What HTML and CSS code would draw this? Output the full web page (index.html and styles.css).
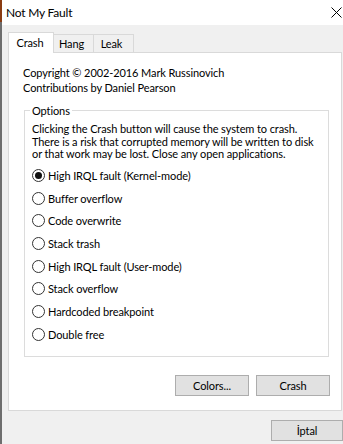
FILE: index.html
```html
<!DOCTYPE html>
<html lang="en">
<head>
    <meta charset="UTF-8">
    <title>Not My Fault</title>
    <link rel="stylesheet" href="styles.css">
</head>
<body>
    <div class="window">
        <div class="edge"></div>
        <div class="main">
            <div class="titlebar">
                <span class="title">Not My Fault</span>
                <svg class="close" width="11" height="11" viewBox="0 0 11 11">
                    <path d="M0.5 0.5 L10.5 10.5 M10.5 0.5 L0.5 10.5" stroke="#000" stroke-width="1" fill="none"/>
                </svg>
            </div>
            <div class="body">
                <div class="tabs">
                    <div class="tab active">Crash</div>
                    <div class="tab">Hang</div>
                    <div class="tab">Leak</div>
                </div>
                <div class="panel">
                    <p class="credits">Copyright © 2002-2016 Mark Russinovich<br>Contributions by Daniel Pearson</p>
                    <fieldset class="options">
                        <legend>Options</legend>
                        <p class="warning">Clicking the Crash button will cause the system to crash.<br>There is a risk that corrupted memory will be written to disk<br>or that work may be lost. Close any open applications.</p>
                        <div class="radio checked"><span class="dot"></span>High IRQL fault (Kernel-mode)</div>
                        <div class="radio"><span class="dot"></span>Buffer overflow</div>
                        <div class="radio"><span class="dot"></span>Code overwrite</div>
                        <div class="radio"><span class="dot"></span>Stack trash</div>
                        <div class="radio"><span class="dot"></span>High IRQL fault (User-mode)</div>
                        <div class="radio"><span class="dot"></span>Stack overflow</div>
                        <div class="radio"><span class="dot"></span>Hardcoded breakpoint</div>
                        <div class="radio"><span class="dot"></span>Double free</div>
                    </fieldset>
                    <div class="actions">
                        <button type="button" class="btn">Colors...</button>
                        <button type="button" class="btn">Crash</button>
                    </div>
                </div>
                <div class="footer">
                    <button type="button" class="btn">İptal</button>
                </div>
            </div>
        </div>
    </div>
</body>
</html>
```

FILE: styles.css
```css
* { margin: 0; padding: 0; box-sizing: border-box; }
body {
    width: 343px;
    height: 444px;
    overflow: hidden;
    background: #f0f0f0;
    font-family: Lato, 'Liberation Sans', sans-serif;
    font-size: 11px;
    letter-spacing: -0.1px;
    color: #000;
}
.window { display: flex; height: 444px; }
.edge {
    width: 2px;
    flex-shrink: 0;
    background: linear-gradient(#8a3c12 0, #8a3c12 22px, #6e6e6e 22px);
}
.main { flex: 1; display: flex; flex-direction: column; }

.titlebar {
    height: 25px;
    background: #fff;
    display: flex;
    align-items: center;
    justify-content: space-between;
    padding: 0 1px 1px 4px;
}
.title { font-size: 12px; line-height: 15px; letter-spacing: -0.2px; }
.close { margin-top: 1px; }

.body { padding: 7px 0 0 6px; }
.tabs { display: flex; align-items: flex-end; height: 20px; }
.tab {
    width: 40px;
    height: 18px;
    line-height: 18px;
    padding-right: 4px;
    text-align: center;
    border: 1px solid #d9d9d9;
    border-bottom: none;
    border-left: none;
    background: #f0f0f0;
}
.tab.active {
    position: relative;
    z-index: 1;
    width: 46px;
    height: 21px;
    margin-bottom: -1px;
    padding-right: 2px;
    border-left: 1px solid #d9d9d9;
    background: #fff;
    line-height: 19px;
}

.panel {
    width: 334px;
    height: 359px;
    background: #fff;
    border: 1px solid #d9d9d9;
    padding: 12px 0 0 14px;
}
.credits { line-height: 15px; white-space: nowrap; }

.options {
    width: 305px;
    margin: 8px 0 0 1px;
    border: 1px solid #dcdcdc;
    padding: 0 7px 10px 7px;
}
.options legend { padding: 0 2px; margin-left: -2px; line-height: 15px; }
.warning { line-height: 12.7px; margin-top: 5px; margin-bottom: 3px; white-space: nowrap; }

.radio {
    display: flex;
    align-items: center;
    height: 22.7px;
    white-space: nowrap;
}
.dot {
    width: 13px;
    height: 13px;
    border: 1px solid #333;
    border-radius: 50%;
    background: #fff;
    margin-right: 3px;
    display: flex;
    align-items: center;
    justify-content: center;
}
.radio.checked .dot::after {
    content: "";
    width: 7px;
    height: 7px;
    border-radius: 50%;
    background: #111;
}

.actions {
    width: 307px;
    margin-top: 18px;
    display: flex;
    justify-content: flex-end;
    gap: 7px;
}
.btn {
    width: 74px;
    height: 21px;
    background: #e1e1e1;
    border: 1px solid #adadad;
    font-family: inherit;
    font-size: 11px;
    letter-spacing: inherit;
    color: #000;
}
.footer {
    display: flex;
    justify-content: flex-end;
    padding-top: 9px;
}
.footer .btn { width: 72px; }
```
